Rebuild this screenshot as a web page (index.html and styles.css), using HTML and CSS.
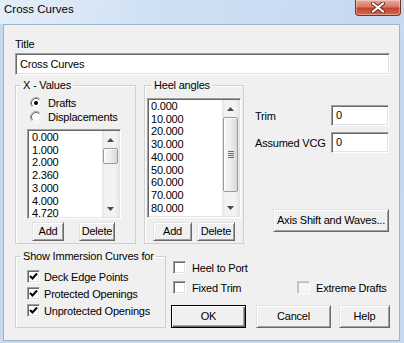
FILE: index.html
```html
<!DOCTYPE html>
<html lang="en">
<head>
  <meta charset="UTF-8">
  <title>Cross Curves</title>
  <link rel="stylesheet" href="styles.css">
</head>
<body>
  <div class="window">
    <div class="titlebar">
      <span class="caption">Cross Curves</span>
      <div class="close-btn">
        <svg width="14" height="11" viewBox="0 0 14 11">
          <path d="M2 1.5 L12 9.5 M12 1.5 L2 9.5" stroke="#6b2a20" stroke-width="4" stroke-linecap="round"/>
          <path d="M2 1.5 L12 9.5 M12 1.5 L2 9.5" stroke="#fff" stroke-width="2.2" stroke-linecap="round"/>
        </svg>
      </div>
    </div>

    <div class="client">
      <div class="field-label">Title</div>
      <div class="edit title-edit">Cross Curves</div>

      <div class="main">
        <fieldset class="group xvalues">
          <legend>X - Values</legend>
          <div class="radio-row first">
            <svg class="radio" width="12" height="12" viewBox="0 0 12 12">
              <circle cx="6" cy="6" r="5" fill="#fff"/>
              <path d="M2.11 9.89 A5.5 5.5 0 0 1 9.89 2.11" stroke="#a0a0a0" fill="none"/>
              <path d="M9.89 2.11 A5.5 5.5 0 0 1 2.11 9.89" stroke="#fff" fill="none"/>
              <path d="M2.82 9.18 A4.5 4.5 0 0 1 9.18 2.82" stroke="#696969" fill="none"/>
              <path d="M9.18 2.82 A4.5 4.5 0 0 1 2.82 9.18" stroke="#e3e3e3" fill="none"/>
              <circle cx="6" cy="6" r="2" fill="#000"/>
            </svg>
            <span>Drafts</span>
          </div>
          <div class="radio-row">
            <svg class="radio" width="12" height="12" viewBox="0 0 12 12">
              <circle cx="6" cy="6" r="5" fill="#fff"/>
              <path d="M2.11 9.89 A5.5 5.5 0 0 1 9.89 2.11" stroke="#a0a0a0" fill="none"/>
              <path d="M9.89 2.11 A5.5 5.5 0 0 1 2.11 9.89" stroke="#fff" fill="none"/>
              <path d="M2.82 9.18 A4.5 4.5 0 0 1 9.18 2.82" stroke="#696969" fill="none"/>
              <path d="M9.18 2.82 A4.5 4.5 0 0 1 2.82 9.18" stroke="#e3e3e3" fill="none"/>
            </svg>
            <span>Displacements</span>
          </div>
          <div class="listbox x-list">
            <div class="items">
              <div>0.000</div>
              <div>1.000</div>
              <div>2.000</div>
              <div>2.360</div>
              <div>3.000</div>
              <div>4.000</div>
              <div>4.720</div>
            </div>
            <div class="vscroll">
              <div class="arrow"><svg width="7" height="4"><path d="M3.5 0 L7 4 H0Z" fill="#4a4a4a"/></svg></div>
              <div class="track"><div class="thumb x-thumb"></div></div>
              <div class="arrow"><svg width="7" height="4"><path d="M0 0 H7 L3.5 4Z" fill="#4a4a4a"/></svg></div>
            </div>
          </div>
          <div class="btn-row">
            <div class="btn x-add">Add</div>
            <div class="btn x-del">Delete</div>
          </div>
        </fieldset>

        <fieldset class="group heel">
          <legend>Heel angles</legend>
          <div class="listbox heel-list">
            <div class="items">
              <div>0.000</div>
              <div>10.000</div>
              <div>20.000</div>
              <div>30.000</div>
              <div>40.000</div>
              <div>50.000</div>
              <div>60.000</div>
              <div>70.000</div>
              <div>80.000</div>
              <div>90.000</div>
            </div>
            <div class="vscroll">
              <div class="arrow"><svg width="7" height="4"><path d="M3.5 0 L7 4 H0Z" fill="#4a4a4a"/></svg></div>
              <div class="track">
                <div class="thumb heel-thumb">
                  <span></span><span></span><span></span><span></span>
                </div>
              </div>
              <div class="arrow"><svg width="7" height="4"><path d="M0 0 H7 L3.5 4Z" fill="#4a4a4a"/></svg></div>
            </div>
          </div>
          <div class="btn-row">
            <div class="btn heel-add">Add</div>
            <div class="btn heel-del">Delete</div>
          </div>
        </fieldset>

        <div class="side">
          <div class="side-row trim-row">
            <span>Trim</span>
            <div class="edit small-edit">0</div>
          </div>
          <div class="side-row vcg-row">
            <span>Assumed VCG</span>
            <div class="edit small-edit">0</div>
          </div>
          <div class="btn axis-btn">Axis Shift and Waves...</div>
        </div>
      </div>

      <div class="bottom">
        <fieldset class="group immersion">
          <legend>Show Immersion Curves for</legend>
          <div class="check-row first">
            <span class="check-box"><svg width="9" height="9"><path d="M1 4 L3.5 6.5 L8 1.5" stroke="#000" stroke-width="2" fill="none"/></svg></span>
            <span>Deck Edge Points</span>
          </div>
          <div class="check-row">
            <span class="check-box"><svg width="9" height="9"><path d="M1 4 L3.5 6.5 L8 1.5" stroke="#000" stroke-width="2" fill="none"/></svg></span>
            <span>Protected Openings</span>
          </div>
          <div class="check-row">
            <span class="check-box"><svg width="9" height="9"><path d="M1 4 L3.5 6.5 L8 1.5" stroke="#000" stroke-width="2" fill="none"/></svg></span>
            <span>Unprotected Openings</span>
          </div>
        </fieldset>

        <div class="opts">
          <div class="opt-row first">
            <div class="opt">
              <span class="check-box"></span>
              <span>Heel to Port</span>
            </div>
          </div>
          <div class="opt-row">
            <div class="opt wide">
              <span class="check-box"></span>
              <span>Fixed Trim</span>
            </div>
            <div class="opt">
              <span class="check-box dim"></span>
              <span>Extreme Drafts</span>
            </div>
          </div>
          <div class="dlg-buttons">
            <div class="btn default ok-btn">OK</div>
            <div class="btn cancel-btn">Cancel</div>
            <div class="btn help-btn">Help</div>
          </div>
        </div>
      </div>
    </div>
  </div>
</body>
</html>
```

FILE: styles.css
```css
* {
  box-sizing: border-box;
}
body {
  margin: 0;
  font-family: 'Liberation Sans', Arial, sans-serif;
  font-size: 11px;
  letter-spacing: -0.2px;
  color: #000;
  background: #c8daef;
}
.window {
  width: 404px;
  height: 343px;
  display: flex;
  flex-direction: column;
  padding: 0 4px 2px 3px;
  background: linear-gradient(to bottom, #d2e2f4 0, #c4d7ee 40px, #c6d9ef 100%);
}
.titlebar {
  height: 24px;
  display: flex;
  justify-content: space-between;
  align-items: flex-start;
  margin: 0 -4px 0 -3px;
  padding: 0 3px 0 4px;
  background: linear-gradient(100deg, #e4eefa 0, #cfe0f4 40%, #c5d8ef 100%);
}
.caption {
  font-size: 11.5px;
  letter-spacing: 0;
  line-height: 13px;
  margin-top: 3px;
  color: #000;
}
.close-btn {
  width: 46px;
  height: 16px;
  margin-right: 0;
  display: flex;
  align-items: center;
  justify-content: center;
  border: 1px solid #7b3025;
  border-top: none;
  border-radius: 0 0 4px 4px;
  background: linear-gradient(to bottom, #e9a99b 0, #d87a66 45%, #c5432c 55%, #d4694f 100%);
  box-shadow: inset 0 0 0 1px rgba(255,255,255,0.35);
}
.client {
  flex: 1;
  border: 1px solid #9fb3cb;
  background: #f0f0f0;
  padding: 13px 9px 0 11px;
}
.field-label {
  line-height: 13px;
}
.edit {
  background: #fff;
  border: 1px solid;
  border-color: #a0a0a0 #fff #fff #a0a0a0;
  box-shadow: inset 1px 1px #696969, inset -1px -1px #e3e3e3;
  padding: 3px 0 0 4px;
  line-height: 13px;
}
.title-edit {
  margin-top: 2px;
  height: 22px;
  padding-top: 4px;
}
.main {
  display: flex;
  align-items: flex-start;
  margin-top: 4px;
}
.group {
  margin: 0;
  padding: 0;
  min-width: 0;
  border: 1px solid #d0d0d0;
  box-shadow: 1px 1px #fff inset;
}
.group legend {
  padding: 0 2px;
  margin-left: 5px;
  line-height: 13px;
}
.xvalues {
  width: 121px;
  height: 165px;
}
.heel {
  width: 100px;
  height: 165px;
  margin-left: 8px;
}
.heel legend {
  margin-left: 7px;
}
.radio-row {
  display: flex;
  align-items: center;
  height: 14px;
  padding-left: 14px;
  gap: 6px;
}
.radio-row.first {
  margin-top: 4px;
}
.listbox {
  display: flex;
  background: #fff;
  border: 1px solid;
  border-color: #a0a0a0 #fff #fff #a0a0a0;
  box-shadow: inset 1px 1px #696969, inset -1px -1px #e3e3e3;
  padding: 1px;
  overflow: hidden;
}
.items {
  flex: 1;
  overflow: hidden;
  line-height: 12.7px;
}
.x-list {
  width: 94px;
  height: 90px;
  margin: 5px 0 0 11px;
}
.x-list .items {
  padding-left: 3px;
}
.heel-list {
  width: 94px;
  height: 120px;
  margin: 6px 0 0 2px;
}
.heel-list .items {
  padding-left: 2px;
}
.vscroll {
  width: 17px;
  display: flex;
  flex-direction: column;
  background: linear-gradient(to right, #e3e3e3 0, #f2f2f2 3px, #f2f2f2 13px, #e6e6e6 100%);
}
.arrow {
  height: 17px;
  display: flex;
  align-items: center;
  justify-content: center;
}
.track {
  flex: 1;
  padding: 0 1px;
}
.thumb {
  border: 1px solid #9a9a9a;
  border-radius: 2px;
  background: linear-gradient(to right, #f7f7f7 0, #ececec 50%, #d9d9d9 100%);
  box-shadow: inset 1px 1px #fff;
}
.x-thumb {
  height: 16px;
}
.heel-thumb {
  height: 75px;
  margin-top: 0;
  display: flex;
  flex-direction: column;
  align-items: center;
  justify-content: center;
  gap: 1px;
}
.heel-thumb span {
  display: block;
  width: 6px;
  height: 1px;
  background: #6e6e6e;
}
.btn-row {
  display: flex;
  margin-top: 3px;
}
.btn {
  display: flex;
  align-items: center;
  justify-content: center;
  background: #f0f0f0;
  border: 1px solid;
  border-color: #e3e3e3 #696969 #696969 #e3e3e3;
  box-shadow: inset 1px 1px #fff, inset -1px -1px #a0a0a0;
  line-height: 13px;
}
.x-add {
  width: 32px;
  height: 19px;
  margin-left: 16px;
}
.x-del {
  width: 36px;
  height: 19px;
  margin-left: 15px;
}
.heel .btn-row {
  margin-top: 4px;
}
.heel-add {
  width: 39px;
  height: 19px;
  margin-left: 8px;
}
.heel-del {
  width: 38px;
  height: 19px;
  margin-left: 5px;
}
.side {
  flex: 1;
  display: flex;
  flex-direction: column;
  margin-left: 11px;
}
.side-row {
  display: flex;
  justify-content: space-between;
  align-items: center;
}
.trim-row {
  margin-top: 26px;
}
.vcg-row {
  margin-top: 6px;
}
.small-edit {
  width: 58px;
  height: 21px;
  margin-right: 1px;
}
.axis-btn {
  align-self: flex-end;
  width: 116px;
  height: 23px;
  margin: 56px 1px 0 0;
}
.bottom {
  display: flex;
  align-items: flex-start;
  margin-top: 6px;
}
.immersion {
  width: 151px;
  height: 78px;
}
.check-row {
  display: flex;
  align-items: center;
  height: 17px;
  padding-left: 11px;
  gap: 4px;
}
.check-row.first {
  margin-top: 5px;
}
.check-box {
  width: 13px;
  height: 13px;
  flex: none;
  display: flex;
  align-items: center;
  justify-content: center;
  background: #fff;
  border: 1px solid;
  border-color: #a0a0a0 #fff #fff #a0a0a0;
  box-shadow: inset 1px 1px #696969, inset -1px -1px #e3e3e3;
}
.check-box.dim {
  background: #f6f6f6;
  border-color: #c8c8c8 #fff #fff #c8c8c8;
  box-shadow: inset 1px 1px #bdbdbd, inset -1px -1px #ececec;
}
.opts {
  flex: 1;
  display: flex;
  flex-direction: column;
  margin-left: 5px;
}
.opt-row {
  display: flex;
  height: 17px;
  margin-top: 3px;
}
.opt-row.first {
  margin-top: 9px;
}
.opt {
  display: flex;
  align-items: center;
  gap: 6px;
  padding-left: 2px;
}
.opt.wide {
  width: 124px;
}
.dlg-buttons {
  display: flex;
  margin-top: 9px;
}
.dlg-buttons .btn {
  height: 23px;
}
.btn.default {
  border-color: #000;
  box-shadow: inset 1px 1px #fff, inset -1px -1px #696969, inset -2px -2px #a0a0a0;
}
.ok-btn {
  width: 75px;
}
.cancel-btn {
  width: 75px;
  margin-left: 10px;
}
.help-btn {
  width: 51px;
  margin-left: 8px;
}
```
